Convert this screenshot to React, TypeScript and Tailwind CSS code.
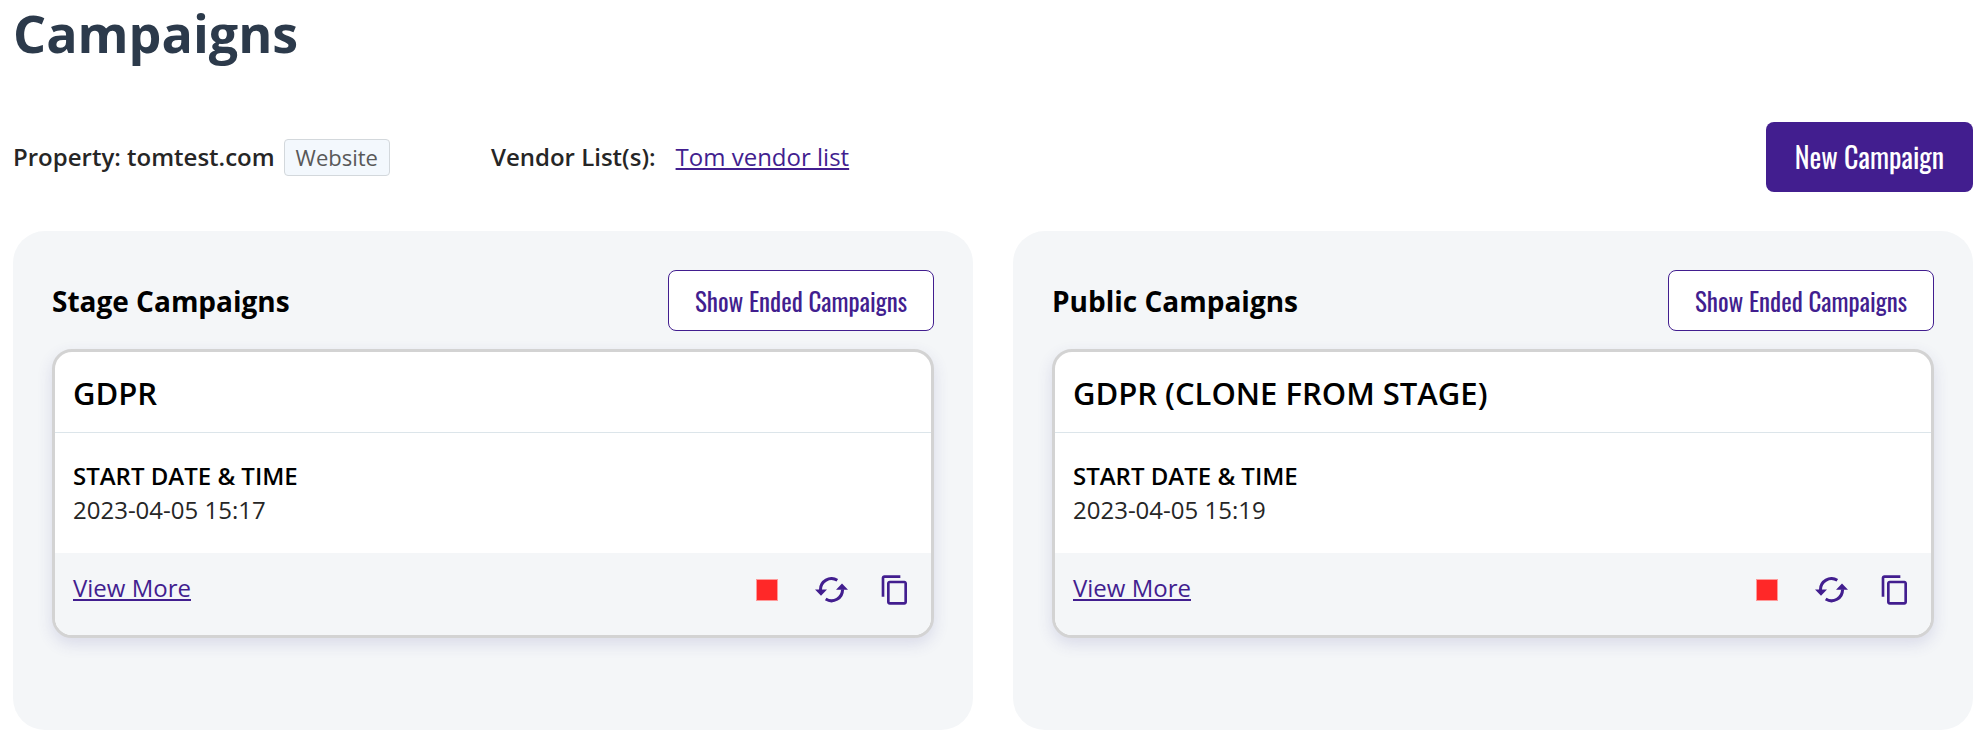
import { MdContentCopy } from "react-icons/md";

type Campaign = {
  name: string;
  startDate: string;
};

type CampaignGroup = {
  title: string;
  campaigns: Campaign[];
};

const groups: CampaignGroup[] = [
  {
    title: "Stage Campaigns",
    campaigns: [{ name: "GDPR", startDate: "2023-04-05 15:17" }],
  },
  {
    title: "Public Campaigns",
    campaigns: [{ name: "GDPR (CLONE FROM STAGE)", startDate: "2023-04-05 15:19" }],
  },
];

function SyncIcon() {
  return (
    <svg viewBox="0 0 33 26" className="h-[26px] w-[33px] shrink-0" fill="none" aria-hidden="true">
      <path
        d="M5.5 13A11 11 0 0 1 22.3 3.3M27.5 12.4A11 11 0 0 1 10.7 22.1"
        stroke="currentColor"
        strokeWidth="3"
      />
      <path d="M0 12.6H12L6 18.8ZM21 12.8H33L27 6.6Z" fill="currentColor" />
    </svg>
  );
}

function CampaignCard({ campaign }: { campaign: Campaign }) {
  return (
    <article className="overflow-hidden rounded-[20px] border-3 border-[#d3d3d3] bg-white shadow-[0_6px_16px_rgba(60,60,140,0.14)]">
      <h3 className="border-b border-[#dce5ea] px-[18px] pt-5 pb-[18px] text-[31px] leading-[42px] font-semibold text-black">
        {campaign.name}
      </h3>
      <div className="px-[18px] py-[26px] text-[24px] leading-[34px]">
        <p className="font-semibold text-black">START DATE &amp; TIME</p>
        <p>{campaign.startDate}</p>
      </div>
      <div className="flex items-center justify-between bg-[#f4f6f8] pt-[17px] pr-5 pb-[29px] pl-[18px]">
        <a href="#" className="text-[24px] leading-[34px] text-[#421e8f] underline decoration-2 underline-offset-2">
          View More
        </a>
        <div className="flex items-center gap-8 pt-1 text-[#421e8f]">
          <button type="button" aria-label="Stop campaign" className="flex size-8 items-center justify-center">
            <span className="size-[22px] border border-[#ff9a9a] bg-[#ff2828]" />
          </button>
          <button type="button" aria-label="Restart campaign" className="flex size-8 items-center justify-center">
            <SyncIcon />
          </button>
          <button type="button" aria-label="Clone campaign" className="flex size-8 items-center justify-center">
            <MdContentCopy className="size-8" />
          </button>
        </div>
      </div>
    </article>
  );
}

function CampaignColumn({ group }: { group: CampaignGroup }) {
  return (
    <section className="min-w-0 flex-1 rounded-[32px] bg-[#f4f6f8] px-[39px] pt-[39px] pb-[92px]">
      <div className="mb-[18px] flex items-center justify-between gap-4">
        <h2 className="text-[28px] leading-[38px] font-bold text-black">{group.title}</h2>
        <button
          type="button"
          className="rounded-lg border border-[#421e8f] bg-white px-[26px] py-3 font-[Oswald,'Liberation_Sans_Narrow',sans-serif] text-[25px] leading-[35px] text-[#421e8f]"
        >
          Show Ended Campaigns
        </button>
      </div>
      {group.campaigns.map((campaign) => (
        <CampaignCard key={campaign.name} campaign={campaign} />
      ))}
    </section>
  );
}

export default function App() {
  return (
    <main className="bg-white pr-[10px] pl-[13px] pb-[7px] font-['Open_Sans',sans-serif] text-[#262626]">
      <h1 className="text-[52px] leading-[66px] font-bold text-[#2c3a4b]">Campaigns</h1>
      <div className="mt-14 flex items-center text-[24px] leading-[34px]">
        <div className="flex items-center gap-[9px]">
          <p className="font-semibold">Property: tomtest.com</p>
          <span className="rounded-sm border border-[#d3d8dc] bg-[#f3f8fd] px-[11px] text-[22px] leading-[35px] text-[#595959]">
            Website
          </span>
        </div>
        <p className="ml-[101px] font-semibold">Vendor List(s):</p>
        <a href="#" className="ml-5 text-[#421e8f] underline decoration-2 underline-offset-2">
          Tom vendor list
        </a>
        <button
          type="button"
          className="ml-auto rounded-lg bg-[#421e8f] px-[29px] py-4 font-[Oswald,'Liberation_Sans_Narrow',sans-serif] text-[28px] leading-[38px] text-white"
        >
          New Campaign
        </button>
      </div>
      <div className="mt-[39px] flex gap-10">
        {groups.map((group) => (
          <CampaignColumn key={group.title} group={group} />
        ))}
      </div>
    </main>
  );
}
